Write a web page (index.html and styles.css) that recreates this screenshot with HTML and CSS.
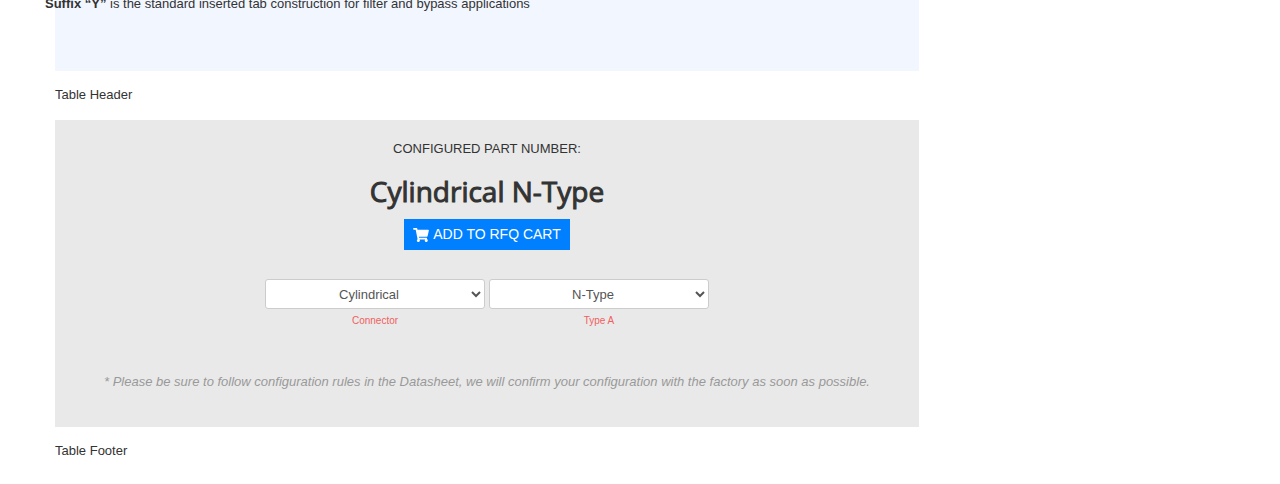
FILE: index.html
```html
<!DOCTYPE html>
<html lang="en">
<head>
<meta charset="utf-8">
<meta name="viewport" content="width=device-width, initial-scale=1">
<title>Configured Part Number</title>
<link rel="stylesheet" href="styles.css">
</head>
<body>
<main class="page">
  <section class="notes">
    <p class="notes-text"><strong>Suffix “Y”</strong> is the standard inserted tab construction for filter and bypass applications</p>
  </section>
  <p class="caption">Table Header</p>
  <form class="configurator">
    <p class="label">CONFIGURED PART NUMBER:</p>
    <h2 class="part-number">Cylindrical N-Type</h2>
    <button class="cart-button" type="button">
      <svg class="cart-icon" viewBox="0 0 576 512" aria-hidden="true"><path fill="currentColor" d="M528.12 301.319l47.273-208C578.806 78.301 567.391 64 551.99 64H159.208l-9.166-44.81C147.758 8.021 137.93 0 126.529 0H24C10.745 0 0 10.745 0 24v16c0 13.255 10.745 24 24 24h69.883l70.248 343.435C147.325 417.1 136 435.222 136 456c0 30.928 25.072 56 56 56s56-25.072 56-56c0-15.674-6.447-29.835-16.824-40h209.647C430.447 426.165 424 440.326 424 456c0 30.928 25.072 56 56 56s56-25.072 56-56c0-22.172-12.888-41.332-31.579-50.405l5.517-24.276c3.413-15.018-8.002-29.319-23.403-29.319H218.117l-6.545-32h293.145c11.206 0 20.92-7.754 23.403-18.681z"/></svg>
      <span>ADD TO RFQ CART</span>
    </button>
    <div class="options">
      <div class="option">
        <select class="option-select" id="connector"><option>Cylindrical</option></select>
        <label class="option-label" for="connector">Connector</label>
      </div>
      <div class="option">
        <select class="option-select" id="type-a"><option>N-Type</option></select>
        <label class="option-label" for="type-a">Type A</label>
      </div>
    </div>
    <p class="disclaimer">* Please be sure to follow configuration rules in the Datasheet, we will confirm your configuration with the factory as soon as possible.</p>
  </form>
  <p class="caption">Table Footer</p>
</main>
</body>
</html>
```
FILE: styles.css
```css
* {
  box-sizing: border-box;
}

body {
  margin: 0;
  background: #fff;
  color: #333;
  font: 13px/20px "Liberation Sans", Arial, sans-serif;
}

p {
  margin: 0;
}

.page {
  max-width: 974px;
  padding: 0 55px;
}

.notes {
  padding-bottom: 57px;
  background: #f2f6ff;
}

.notes-text {
  margin: -6px -10px 0;
}

.caption {
  padding: 14px 0 15px;
}

.configurator {
  display: flex;
  flex-direction: column;
  align-items: center;
  padding: 19px 20px 35px;
  background: #e9e9e9;
  text-align: center;
}

.part-number {
  margin: 12px 0 8px;
  font: 400 28px/40px "Open Sans", sans-serif;
  -webkit-text-stroke: 1px currentColor;
}

.cart-button {
  display: flex;
  align-items: center;
  gap: 4px;
  padding: 5px 9px;
  border: 0;
  background: #0080ff;
  color: #fff;
  font: 14px/21px "Liberation Sans", Arial, sans-serif;
}

.cart-icon {
  width: 16px;
  height: 14px;
}

.options {
  display: flex;
  flex-wrap: wrap;
  justify-content: center;
  gap: 4px;
  margin: 29px 0 41px;
}

.option {
  display: flex;
  flex-direction: column;
  width: 220px;
}

.option-select {
  width: 100%;
  height: 30px;
  padding: 4px 6px;
  border: 1px solid #ccc;
  border-radius: 3px;
  background: #fff;
  color: #555;
  font: 13px/20px "Liberation Sans", Arial, sans-serif;
  text-align: center;
  text-align-last: center;
}

.option-label {
  padding-top: 2px;
  color: #f06060;
  font-size: 10px;
  line-height: 20px;
}

.disclaimer {
  color: #999;
  font-style: italic;
}
```
